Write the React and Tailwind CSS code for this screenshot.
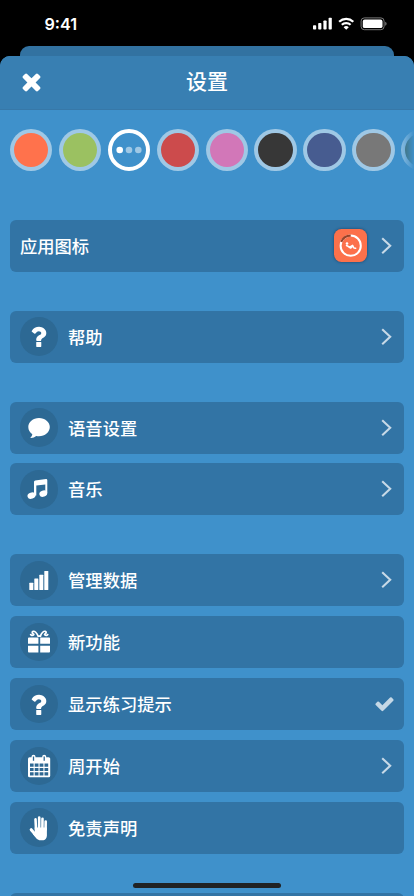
import React from "react";

const times =
  "M1490 1322q0 40-28 68l-136 136q-28 28-68 28t-68-28l-294-294-294 294q-28 28-68 28t-68-28l-136-136q-28-28-28-68t28-68l294-294-294-294q-28-28-28-68t28-68l136-136q28-28 68-28t68 28l294 294 294-294q28-28 68-28t68 28l136 136q28 28 28 68t-28 68l-294 294 294 294q28 28 28 68z";
const check =
  "M1671 566q0 40-28 68l-724 724-136 136q-28 28-68 28t-68-28l-136-136-362-362q-28-28-28-68t28-68l136-136q28-28 68-28t68 28l294 295 656-657q28-28 68-28t68 28l136 136q28 28 28 68z";
const question =
  "M1088 1256v240q0 16-12 28t-28 12h-240q-16 0-28-12t-12-28v-240q0-16 12-28t28-12h240q16 0 28 12t12 28zm316-600q0 54-15.5 101t-35 76.5-55 59.5-57.5 43.5-61 35.5q-41 23-68.5 65t-27.5 67q0 17-12 32.5t-28 15.5h-240q-15 0-25.5-18.5t-10.5-37.5v-45q0-83 65-156.5t143-108.5q59-27 84-56t25-76q0-42-46.5-74t-107.5-32q-65 0-108 29-35 25-107 115-13 16-31 16-12 0-25-8l-164-125q-13-10-15.5-25t5.5-28q160-266 464-266 80 0 161 31t146 83 106 127.5 41 158.5z";

const QuestionIcon = () => (
  <svg viewBox="60 -40 1792 1792" className="size-[28.4px]" fill="currentColor">
    <path d={question} />
  </svg>
);

const CommentIcon = () => (
  <svg viewBox="0 0 38 38" className="size-[38px]" fill="currentColor">
    <path d="M19 8.9c6 0 10.8 4.1 10.8 9.2S25 27.300 19 27.300c-1 0-1.900-.1-2.800-.3-1.500 1.200-3.200 1.900-5.200 2.100-.5 0-.6-.5-.3-.8.9-.8 1.400-1.700 1.600-3-2.500-1.700-4-4.200-4-7.200C8.300 13 13 8.900 19 8.900z" />
  </svg>
);

const MusicIcon = () => (
  <svg viewBox="0 0 38 38" className="size-[38px]" fill="currentColor">
    <path d="M14 11.800q.1-1.200 1.200-1.400l10.800-1.300q1.300-.1 1.300 1.200V23h-2v-8.500l-9 1.100V25.500H14z" />
    <ellipse cx="11.500" cy="25.700" rx="4.100" ry="3.100" transform="rotate(-20 11.500 25.700)" />
    <ellipse cx="23.300" cy="23.600" rx="4" ry="3.100" transform="rotate(-20 23.300 23.600)" />
  </svg>
);

const BarsIcon = () => (
  <svg viewBox="0 0 38 38" className="size-[38px]" fill="currentColor">
    <rect x="9.3" y="21.7" width="4" height="7.4" rx=".5" />
    <rect x="14.3" y="17.6" width="4" height="11.5" rx=".5" />
    <rect x="19.3" y="13.8" width="4" height="15.3" rx=".5" />
    <rect x="24.3" y="9.9" width="4" height="19.2" rx=".5" />
  </svg>
);

const GiftIcon = () => (
  <svg viewBox="0 0 38 38" className="size-[38px]">
    <path
      d="M8.900 14.600h9.500v6.200H8v-5.300q0-.9.900-.9zM20.200 14.600h8.900q.9 0 .9.900v5.300h-9.800zM8 22.700h10.400v6.700H8.900q-.9 0-.9-.9zM20.200 22.700H30v5.800q0 .9-.9.900h-8.900z"
      fill="currentColor"
    />
    <path d="M17.400 12.200h3.800v1.800h-3.800z" fill="currentColor" />
    <g fill="none" stroke="currentColor" strokeWidth="1.700" strokeLinejoin="round">
      <path d="M18 12.800c-1.400-2.900-3.300-4.800-4.900-4.500-1.300.3-1.100 1.800.1 2.400 1.300.6.5 1.700-1.500 1.600-.8-.1-1.100-.7-1.200-1.500" />
      <path d="M20.400 12.800c1.400-2.900 3.300-4.800 4.900-4.500 1.300.3 1.100 1.800-.1 2.400-1.300.6-.5 1.700 1.500 1.600.8-.1 1.100-.7 1.200-1.500" />
    </g>
  </svg>
);

const CalendarIcon = () => (
  <svg viewBox="0 0 38 38" className="size-[38px]">
    <rect x="8" y="10.2" width="22.2" height="20" rx="1.5" fill="currentColor" />
    <g className="fill-[#2e6893]">
      <path d="M10 16.600h3.600v3.100H10zM14.700 16.600h3.800v3.100h-3.800zM19.600 16.600h3.800v3.100h-3.800zM24.500 16.600h3.700v3.100h-3.700z" />
      <path d="M10 20.900h3.600V24H10zM14.700 20.900h3.800V24h-3.800zM19.600 20.900h3.800V24h-3.800zM24.500 20.900h3.700V24h-3.700z" />
      <path d="M10 25.200h3.600v3.200H10zM14.700 25.200h3.800v3.200h-3.800zM19.600 25.200h3.800v3.200h-3.800zM24.500 25.200h3.700v3.200h-3.700z" />
    </g>
    <rect x="11.5" y="7.700" width="4" height="6.600" rx="2" fill="currentColor" />
    <rect x="22.200" y="7.700" width="4" height="6.600" rx="2" fill="currentColor" />
    <path d="M13.500 9.600v4.200M24.200 9.600v4.200" className="stroke-[#2e6893]" strokeWidth="1.300" />
  </svg>
);

const HandIcon = () => (
  <svg viewBox="0 0 38 38" className="size-[38px]" fill="none" stroke="currentColor" strokeLinecap="round" strokeLinejoin="round">
    <path d="M16 20l-.5-9.800M19.200 20V8.600M22.400 20l.1-10.200M25.600 20.500l.1-8" strokeWidth="2.600" />
    <path d="M11.200 20.700l4.600 5.400" strokeWidth="3" />
    <path d="M14.700 18.500h12.200v8.300q-.4 3.700-3.400 4.500h-4.200q-2.400-.4-4.100-3.200l-2.600-3.400 2.100-1z" fill="currentColor" stroke="none" />
  </svg>
);

const DotsIcon = () => (
  <svg viewBox="0 0 26 8" className="h-[8px] w-[26px] shrink-0 fill-[#9fc8e5]">
    <circle cx="3.700" cy="4" r="3.300" fill="#fff" />
    <circle cx="13" cy="4" r="3.300" />
    <circle cx="22.300" cy="4" r="3.300" />
  </svg>
);

const Chevron = () => (
  <svg viewBox="0 0 11 18" className="mr-[12.5px] h-[18px] w-[11px]" fill="none" stroke="#c7d9e7" strokeWidth="2.1">
    <path d="M1.200 1.200l8 7.500-8 7.500" />
  </svg>
);

const Check = () => (
  <svg viewBox="0 60 1792 1792" className="mr-[9px] size-[21px] fill-[#c5d8e6]">
    <path d={check} />
  </svg>
);

const AppIcon = () => (
  <span className="mr-[14px] flex size-[33px] items-center justify-center rounded-[7.5px] bg-[#fc714b] shadow-[0_0_3px_rgba(0,20,50,0.5)]">
    <svg viewBox="0 0 33 33" className="size-[33px]" fill="none">
      <circle cx="16.700" cy="16.700" r="10.100" stroke="#fff" strokeWidth="2" />
      <path d="M7.200 12.800A10.100 10.100 0 0 1 16.700 6.600" stroke="#994329" strokeWidth="2.1" />
      <circle cx="13" cy="14.500" r="1.300" fill="#fff" />
      <path d="M12.500 16.500l3.200 1.700 2.900-1.900 1.300 2.700 1.700.3M14 17.400l2.600 1.700 1.800-1.700" stroke="#fff" strokeWidth="1.500" strokeLinecap="round" strokeLinejoin="round" />
    </svg>
  </span>
);

const groups = [
  [{ label: "应用图标", extra: AppIcon, end: Chevron }],
  [{ label: "帮助", icon: QuestionIcon, end: Chevron }],
  [
    { label: "语音设置", icon: CommentIcon, end: Chevron },
    { label: "音乐", icon: MusicIcon, end: Chevron },
  ],
  [
    { label: "管理数据", icon: BarsIcon, end: Chevron },
    { label: "新功能", icon: GiftIcon },
    { label: "显示练习提示", icon: QuestionIcon, end: Check },
    { label: "周开始", icon: CalendarIcon, end: Chevron },
    { label: "免责声明", icon: HandIcon },
  ],
  [{ label: "" }],
];

const swatches = [
  "bg-[#ff724c]",
  "bg-[#9bc161]",
  "dots",
  "bg-[#cc4b4c]",
  "bg-[#d277b8]",
  "bg-[#373737]",
  "bg-[#475c90]",
  "bg-[#787878]",
  "bg-[#46614f]",
];

function Row({ label, icon: Icon, extra: Extra, end: End }) {
  return (
    <div className="flex h-[52px] shrink-0 items-center rounded-[6px] bg-[#3274a5] pl-[10px]">
      {Icon && (
        <span className="mr-[9.7px] flex size-[38.4px] items-center justify-center rounded-full bg-[#2d6994]">
          <Icon />
        </span>
      )}
      <span className="flex-1 text-[17.3px] leading-6 font-medium">{label}</span>
      {Extra && <Extra />}
      {End && <End />}
    </div>
  );
}

function Swatch({ kind }) {
  if (kind === "dots") {
    return (
      <div className="flex size-[42.4px] shrink-0 items-center justify-center rounded-full border-4 border-white">
        <DotsIcon />
      </div>
    );
  }
  return (
    <div className="size-[42.4px] shrink-0 rounded-full bg-[#9fc8e5] p-[4px]">
      <div className={"size-full rounded-full " + kind} />
    </div>
  );
}

export default function App() {
  return (
    <div className="relative flex h-[896px] w-[414px] flex-col overflow-hidden bg-black font-['Noto_Sans_CJK_SC',sans-serif] text-white">
      <div className="flex h-[46px] shrink-0 items-center justify-between pt-[2px] pr-[27px] pl-[44.5px]">
        <span className="font-['Inter',sans-serif] text-[16.2px] leading-5 font-semibold">9:41</span>
        <svg viewBox="0 0 74 14" className="h-[14px] w-[74px]" fill="#fff">
          <rect x="0" y="8.2" width="3.2" height="4.4" rx=".8" />
          <rect x="5.2" y="6" width="3.2" height="6.6" rx=".8" />
          <rect x="10.4" y="3.4" width="3.2" height="9.2" rx=".8" />
          <rect x="15.6" y=".8" width="3.2" height="11.8" rx=".8" />
          <g fill="none" stroke="#fff" strokeWidth="2.2">
            <path d="M26.1 4.7a10.4 10.4 0 0 1 14.2 0" />
            <path d="M28.8 7.8a6.4 6.4 0 0 1 8.8 0" />
          </g>
          <path d="M33.2 12.8l-2.6-2.6a3.7 3.7 0 0 1 5.2 0z" />
          <rect x="48.1" y=".9" width="23" height="11.8" rx="3.2" fill="none" stroke="#777" strokeWidth="1" />
          <rect x="49.8" y="2.5" width="19.7" height="8.6" rx="1.9" />
          <path d="M72.2 4.8q1.4.6 1.4 2t-1.4 2z" fill="#777" />
        </svg>
      </div>
      <div className="mx-[20px] h-[9.5px] shrink-0 rounded-t-[9px] bg-[#3272a1]" />
      <div className="flex min-h-0 flex-1 flex-col overflow-hidden rounded-t-[10px] bg-[#3f91cb]">
        <header className="grid h-[54.5px] shrink-0 grid-cols-[1fr_auto_1fr] items-center border-b border-[#3778a8] bg-[#387fb2] pb-[2px]">
          <svg viewBox="0 0 1792 1792" className="ml-[17.8px] size-[27px]" fill="currentColor">
            <path d={times} />
          </svg>
          <h1 className="pb-[3px] text-[21px] leading-7 font-medium">设置</h1>
        </header>
        <div className="flex shrink-0 gap-[6.5px] overflow-hidden pt-[18.8px] pl-[10px] [mask-image:linear-gradient(to_right,#000_96%,transparent_100%)]">
          {swatches.map((s) => (
            <Swatch key={s} kind={s} />
          ))}
        </div>
        <main className="mt-[48.5px] flex flex-col gap-[39px] px-[10px]">
          {groups.map((rows, i) => (
            <section key={i} className="flex flex-col gap-[9.8px]">
              {rows.map((r) => (
                <Row key={r.label} {...r} />
              ))}
            </section>
          ))}
        </main>
      </div>
      <div className="absolute bottom-[8px] left-[133px] h-[5px] w-[148px] rounded-full bg-[#202224]" />
    </div>
  );
}
